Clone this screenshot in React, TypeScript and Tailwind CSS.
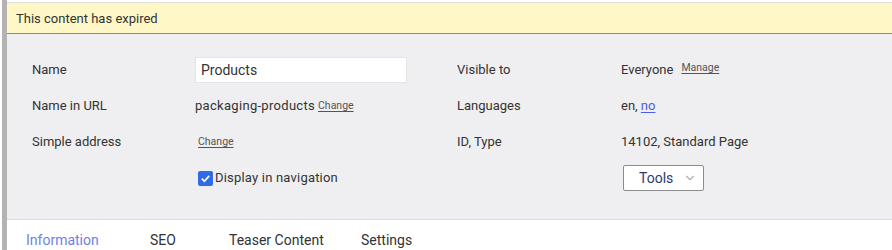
import { ChevronDown } from "lucide-react";

const font = { fontFamily: "Roboto, 'Noto Sans', Arial, sans-serif" };

function SmallLink({ children, className = "" }: { children: React.ReactNode; className?: string }) {
  return (
    <a className={`text-[10.5px] text-[#555] underline underline-offset-2 cursor-pointer ${className}`}>{children}</a>
  );
}

export default function App() {
  return (
    <div className="flex h-[250px] w-[892px] overflow-hidden bg-white text-[13px] text-[#333]" style={font}>
      <div className="w-[2px] shrink-0 bg-white" />
      <div className="w-[5px] shrink-0 bg-[#b3b3b3]" />
      <div className="flex min-w-0 flex-1 flex-col">
        <div className="h-[2px] shrink-0 bg-white" />
        <div className="h-px shrink-0 bg-[#dedede]" />
        <div className="flex h-[31px] shrink-0 items-center border-b border-[#8a8a8a] bg-[#fff8c6] pl-[9px] pt-px">
          This content has expired
        </div>

        <div className="shrink-0 border-b border-[#dcdcdc] bg-[#efeff1] pb-[23px] pt-[18px]">
          <div className="grid grid-cols-[163px_262px_164px_1fr] pl-[25px]">
            {/* row 1 */}
            <div className="flex h-9 items-center">Name</div>
            <div className="flex h-9 items-center">
              <div className="flex h-[26px] w-[212px] items-center border border-[#e4e4e4] bg-white px-[5px] text-[14px]">
                Products
              </div>
            </div>
            <div className="flex h-9 items-center">Visible to</div>
            <div className="flex h-9 items-center gap-[8px]">
              <span>Everyone</span>
              <SmallLink className="-mt-[4px]">Manage</SmallLink>
            </div>

            {/* row 2 */}
            <div className="flex h-9 items-center">Name in URL</div>
            <div className="flex h-9 items-center gap-[3px]">
              <span className="tracking-[0.3px]">packaging-products</span>
              <SmallLink>Change</SmallLink>
            </div>
            <div className="flex h-9 items-center">Languages</div>
            <div className="flex h-9 items-center">
              en,&nbsp;<a className="cursor-pointer text-[#4b5de0] underline underline-offset-2">no</a>
            </div>

            {/* row 3 */}
            <div className="flex h-9 items-center">Simple address</div>
            <div className="flex h-9 items-center pl-[3px]">
              <SmallLink>Change</SmallLink>
            </div>
            <div className="flex h-9 items-center">ID, Type</div>
            <div className="flex h-9 items-center">14102, Standard Page</div>

            {/* row 4 */}
            <div className="h-9" />
            <div className="flex h-9 items-center gap-[2px] pl-[3px]">
              <span className="flex h-[15px] w-[15px] items-center justify-center rounded-[2px] bg-[#2f6ae8]">
                <svg viewBox="0 0 12 12" className="h-[11px] w-[11px]">
                  <path d="M2 6.2 L4.8 9 L10 3.2" fill="none" stroke="white" strokeWidth="1.9" />
                </svg>
              </span>
              <span className="tracking-[0.2px]">Display in navigation</span>
            </div>
            <div className="h-9" />
            <div className="flex h-9 items-center pl-[2px]">
              <div className="flex h-[26px] w-[81px] items-center justify-between rounded-[2px] border border-[#8c8c8c] bg-white pl-[15px] pr-[6px] text-[14px] text-[#2d3a6b]">
                <span>Tools</span>
                <ChevronDown className="h-[14px] w-[14px] text-[#b0b0b0]" strokeWidth={2} />
              </div>
            </div>
          </div>
        </div>

        <div className="flex shrink-0 items-center pl-[19px] pt-[10px] text-[14px] leading-5">
          <span className="w-[124px] text-[#6f7fe6]">Information</span>
          <span className="w-[79px]">SEO</span>
          <span className="w-[132px]">Teaser Content</span>
          <span>Settings</span>
        </div>
      </div>
    </div>
  );
}
